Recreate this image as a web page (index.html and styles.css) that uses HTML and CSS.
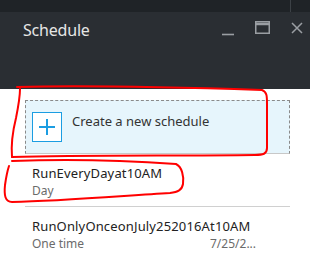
FILE: index.html
```html
<!DOCTYPE html>
<html lang="en">
<head>
    <meta charset="UTF-8">
    <title>Schedule</title>
    <link rel="stylesheet" href="styles.css">
</head>
<body>
    <div class="topbar"><span class="topbar-split"></span></div>
    <div class="blade-header">
        <h1>Schedule</h1>
        <div class="window-controls">
            <svg class="ctl ctl-min" width="14" height="14" viewBox="0 0 14 14"><path d="M1 12.5h12" stroke="currentColor" stroke-width="1.6"/></svg>
            <svg class="ctl ctl-max" width="15" height="13" viewBox="0 0 15 13"><rect x="0.75" y="0.75" width="13.5" height="11.5" fill="none" stroke="currentColor" stroke-width="1.5"/><path d="M1 3h13" stroke="currentColor" stroke-width="2.5"/></svg>
            <svg class="ctl ctl-close" width="12" height="12" viewBox="0 0 12 12"><path d="M1 1l10 10M11 1L1 11" stroke="currentColor" stroke-width="1.5"/></svg>
        </div>
    </div>

    <div class="blade-content">
        <div class="create-box">
            <span class="plus-icon">
                <svg width="18" height="18" viewBox="0 0 18 18"><path d="M9 1v16M1 9h16" stroke="#1b9de2" stroke-width="2"/></svg>
            </span>
            <span class="create-label">Create a new schedule</span>
        </div>

        <div class="schedule-item">
            <div class="item-name">RunEveryDayat10AM</div>
            <div class="item-meta"><span>Day</span></div>
        </div>
        <div class="schedule-item">
            <div class="item-name">RunOnlyOnceonJuly252016At10AM</div>
            <div class="item-meta"><span>One time</span><span class="item-date">7/25/2...</span></div>
        </div>
    </div>

    <!-- hand-drawn red marks from the screenshot -->
    <svg class="marks" width="310" height="259" viewBox="0 0 310 259">
        <path d="M17 87 C90 85 200 88 262 90 C267 92 267 96 267 104 L267 148 C267 154 263 155 255 155 C180 156 80 155 12 157 C11 145 13 130 16 118 C18 108 20 98 20 89" fill="none" stroke="#f00" stroke-width="2" stroke-linecap="round"/>
        <path d="M12 161 C60 159 120 160 176 164 C182 167 184 176 183 184 C182 190 178 192 170 193 C120 196 60 201 12 202 C5 202 4 195 5 185 C6 178 7 172 9 166" fill="none" stroke="#f00" stroke-width="2" stroke-linecap="round"/>
    </svg>
</body>
</html>
```

FILE: styles.css
```css
body {
    margin: 0;
    width: 310px;
    height: 259px;
    overflow: hidden;
    font-family: "Noto Sans", "Open Sans", sans-serif;
    background: #fff;
    position: relative;
}
.topbar {
    height: 12px;
    background: #1f2327;
}
.topbar-split {
    display: block;
    margin-left: 290px;
    width: 1px;
    height: 12px;
    background: #3c4146;
}
.blade-header {
    height: 77px;
    background: #2a2e33;
    display: flex;
    align-items: flex-start;
    justify-content: space-between;
    padding: 0 7px 0 23px;
}
h1 {
    margin: 0;
    padding-top: 7px;
    font-size: 16px;
    font-weight: 400;
    color: #e6e6e6;
    letter-spacing: -0.2px;
}
.window-controls {
    display: flex;
    align-items: flex-start;
    padding-top: 9px;
    color: #9a9ea3;
}
.ctl-min {
    margin-top: 1px;
    margin-right: 20px;
}
.ctl-max {
    margin-right: 21px;
}
.ctl-close {
    margin-top: 1px;
}
.blade-content {
    padding: 11px 20px 0 25px;
}
.create-box {
    height: 52px;
    display: flex;
    align-items: center;
    gap: 10px;
    padding-left: 6px;
    background: #e6f5fc;
    border: 1px dashed #8a8a8a;
    border-bottom: 1px solid #c8c8c8;
}
.plus-icon {
    width: 28px;
    height: 28px;
    border: 1px solid #1b9de2;
    display: flex;
    align-items: center;
    justify-content: center;
    background: #fff;
}
.create-label {
    align-self: flex-start;
    margin-top: 11px;
    font-size: 13px;
    line-height: 18px;
    color: #333;
}
.schedule-item {
    padding: 10px 0 7px 7px;
    border-bottom: 1px solid #d0d0d0;
}
.schedule-item:last-child {
    border-bottom: none;
    padding-top: 10px;
}
.item-name {
    font-size: 13px;
    line-height: 18px;
    letter-spacing: 0.15px;
    color: #222;
}
.item-meta {
    display: flex;
    font-size: 12px;
    line-height: 17px;
    color: #6b6b6b;
}
.item-meta span:first-child {
    width: 178px;
}
.item-date {
    white-space: nowrap;
}
.marks {
    position: absolute;
    left: 0;
    top: 0;
    pointer-events: none;
}
```
